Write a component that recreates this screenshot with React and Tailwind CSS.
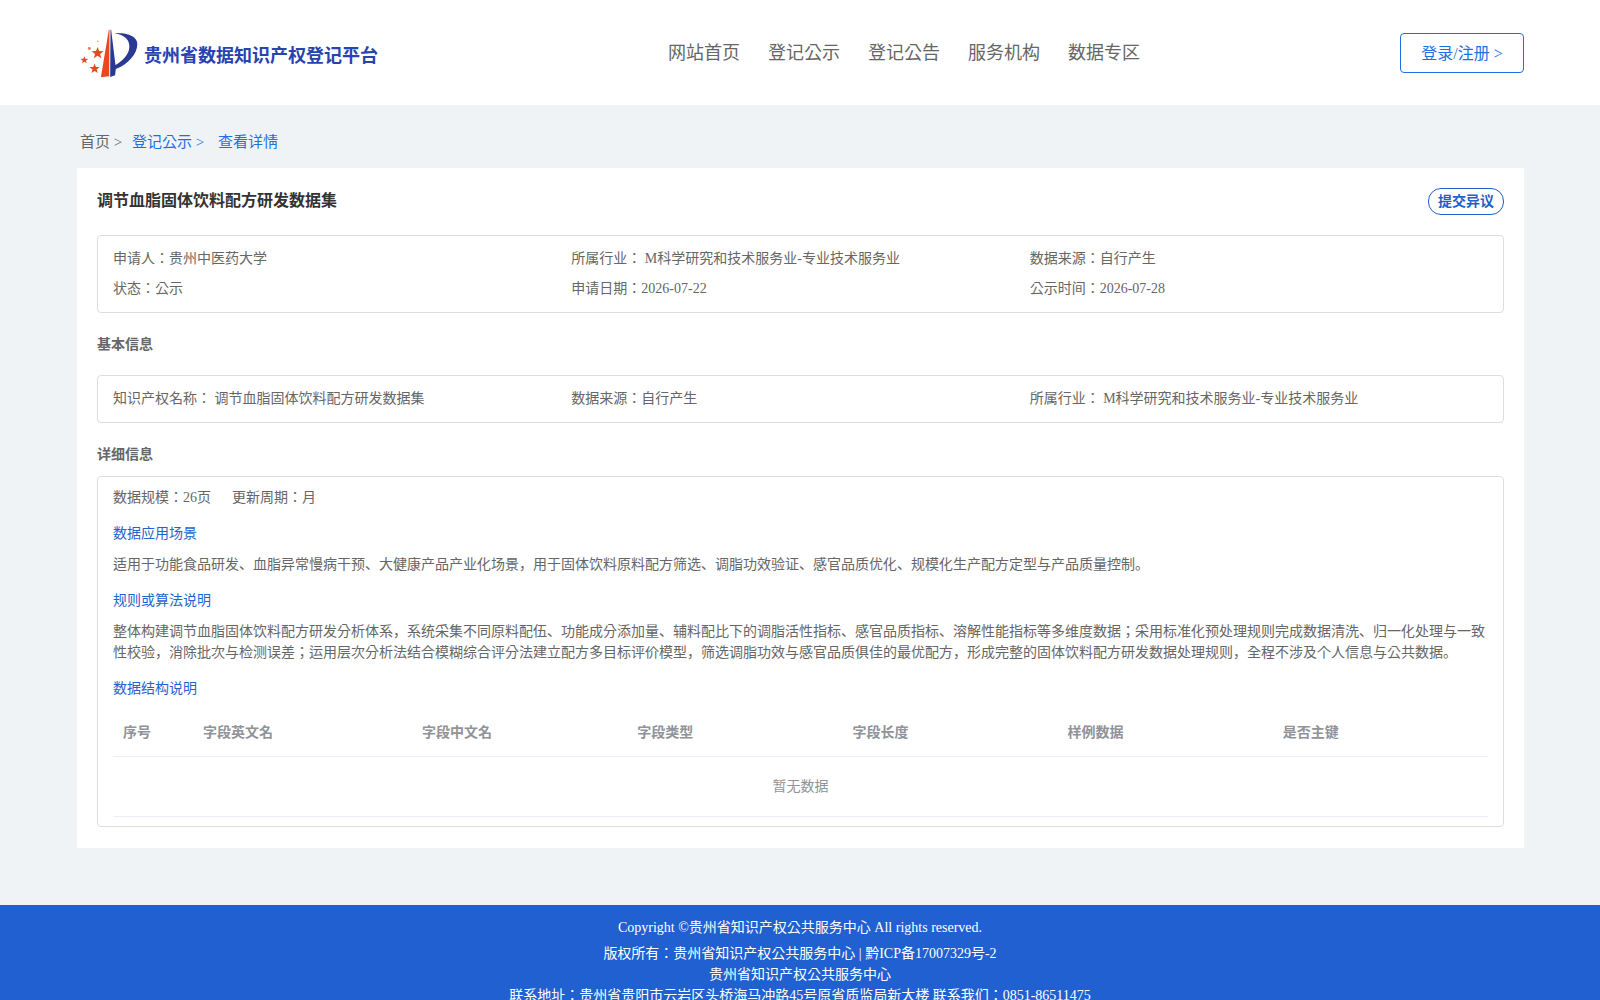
import React from 'react';

const navItems = ['网站首页', '登记公示', '登记公告', '服务机构', '数据专区'];
const columns = ['序号', '字段英文名', '字段中文名', '字段类型', '字段长度', '样例数据', '是否主键'];

const starPoints = (cx, cy, r) =>
  Array.from({ length: 10 }, (_, i) => {
    const a = -Math.PI / 2 + (i * Math.PI) / 5;
    const d = i % 2 === 0 ? r : r * 0.42;
    return `${cx + d * Math.cos(a)},${cy + d * Math.sin(a)}`;
  }).join(' ');

const Logo = () => (
  <svg viewBox="62 55 172 148" className="w-[57px] h-[49px] shrink-0">
    <path d="M146 57 L122 201 L147 198 L148 57 Z" fill="#e8481c" />
    <path d="M151 57 L150 200 L165 195 L167 176 C205 160 232 130 232 100 C232 78 205 65 162 67 C190 72 208 84 208 108 C208 132 187 152 166 164 L153 57 Z" fill="#2a3a94" />
    <polygon points={starPoints(112, 128, 19)} fill="#e8481c" />
    <polygon points={starPoints(103, 175, 16)} fill="#e8481c" />
    <polygon points={starPoints(72, 149, 12)} fill="#e8481c" />
    <circle cx="87" cy="114" r="4.5" fill="#ee7a50" />
    <circle cx="113" cy="92" r="2.5" fill="#ee8a60" />
  </svg>
);

const Header = () => (
  <header className="h-[105px] bg-white pl-[81px] pr-[76px] flex items-center">
    <div className="w-[420px] flex items-center gap-[6px] mt-[1px]">
      <Logo />
      <span className="text-[18px] font-bold text-[#2743b0] mt-[7px]">贵州省数据知识产权登记平台</span>
    </div>
    <nav className="flex gap-7 ml-[167px] text-[18px] text-[#666666] mt-[1px]">
      {navItems.map((item) => (
        <span key={item}>{item}</span>
      ))}
    </nav>
    <button className="ml-auto w-[124px] h-10 border border-[#1f6fe0] rounded text-base text-[#1f6fe0] bg-white pt-[2px]">登录/注册 &gt;</button>
  </header>
);

const Row = ({ children }) => <div className="grid grid-cols-3 h-[30px] items-center">{children}</div>;

const Box = ({ className = '', children }) => (
  <div className={`border border-[#dddddd] rounded px-[15px] ${className}`}>{children}</div>
);

const Heading = ({ className = '', children }) => (
  <h3 className={`text-sm font-bold text-[#666666] ${className}`}>{children}</h3>
);

const Link = ({ className = '', children }) => (
  <div className={`text-sm text-[#1f64cc] ${className}`}>{children}</div>
);

const Detail = () => (
  <section className="ml-[77px] mr-[76px] bg-white p-5 text-sm text-[#666666] h-[680px]">
    <div className="flex items-start justify-between h-[47px]">
      <h2 className="text-base font-bold text-[#333333] mt-[1px]">调节血脂固体饮料配方研发数据集</h2>
      <button className="w-[76px] h-[27px] border border-[#1f5fc8] rounded-[13px] text-sm font-bold text-[#1f5fc8]">提交异议</button>
    </div>
    <Box className="py-[8px]">
      <Row>
        <span>申请人：贵州中医药大学</span>
        <span>所属行业： M科学研究和技术服务业-专业技术服务业</span>
        <span>数据来源：自行产生</span>
      </Row>
      <Row>
        <span>状态：公示</span>
        <span>申请日期：2026-07-22</span>
        <span>公示时间：2026-07-28</span>
      </Row>
    </Box>
    <Heading className="h-[62px] flex items-center pt-[2px]">基本信息</Heading>
    <Box className="pt-2 pb-[8px]">
      <Row>
        <span>知识产权名称： 调节血脂固体饮料配方研发数据集</span>
        <span>数据来源：自行产生</span>
        <span>所属行业： M科学研究和技术服务业-专业技术服务业</span>
      </Row>
    </Box>
    <Heading className="h-[53px] flex items-center pt-[10px]">详细信息</Heading>
    <Box className="h-[351px]">
      <div className="flex gap-[21px] h-[41px] items-center">
        <span>数据规模：26页</span>
        <span>更新周期：月</span>
      </div>
      <Link className="h-[32px] leading-[32px]">数据应用场景</Link>
      <p className="h-[35px] leading-[30px]">适用于功能食品研发、血脂异常慢病干预、大健康产品产业化场景，用于固体饮料原料配方筛选、调脂功效验证、感官品质优化、规模化生产配方定型与产品质量控制。</p>
      <Link className="h-[32px] leading-[32px]">规则或算法说明</Link>
      <p className="leading-[21px] pt-[4px] h-[58px]">整体构建调节血脂固体饮料配方研发分析体系，系统采集不同原料配伍、功能成分添加量、辅料配比下的调脂活性指标、感官品质指标、溶解性能指标等多维度数据；采用标准化预处理规则完成数据清洗、归一化处理与一致性校验，消除批次与检测误差；运用层次分析法结合模糊综合评分法建立配方多目标评价模型，筛选调脂功效与感官品质俱佳的最优配方，形成完整的固体饮料配方研发数据处理规则，全程不涉及个人信息与公共数据。</p>
      <Link className="h-[28px] leading-[28px]">数据结构说明</Link>
      <div className="grid grid-cols-[80px_219px_repeat(5,1fr)] h-[54px] pt-[6px] items-center border-b border-[#ebeef5] text-[#909399] font-bold">
        {columns.map((col) => (
          <div key={col} className="pl-[10px]">{col}</div>
        ))}
      </div>
      <div className="h-[60px] flex items-center justify-center border-b border-[#ebeef5] text-[#909399]">暂无数据</div>
    </Box>
  </section>
);

const Footer = () => (
  <footer className="bg-[#2060d0] text-white text-sm text-center mt-[57px] pt-[12px] pb-[16px]">
    <p className="leading-[21px] mb-[5px]">Copyright ©贵州省知识产权公共服务中心 All rights reserved.</p>
    <p className="leading-[21px]">版权所有：贵州省知识产权公共服务中心 | 黔ICP备17007329号-2</p>
    <p className="leading-[21px]">贵州省知识产权公共服务中心</p>
    <p className="leading-[21px]">联系地址：贵州省贵阳市云岩区头桥海马冲路45号原省质监局新大楼 联系我们：0851-86511475</p>
  </footer>
);

export default function App() {
  return (
    <div className="min-h-screen bg-[#eff3f6] font-['Liberation_Serif','Noto_Sans_CJK_KR',serif]">
      <Header />
      <div className="h-[63px] pl-[80px] flex items-center text-[15px] pt-[12px]">
        <span className="text-[#666666] w-[52px]">首页 &gt;</span>
        <span className="text-[#1f6fe0] w-[86px]">登记公示 &gt;</span>
        <span className="text-[#1f6fe0]">查看详情</span>
      </div>
      <Detail />
      <Footer />
    </div>
  );
}
